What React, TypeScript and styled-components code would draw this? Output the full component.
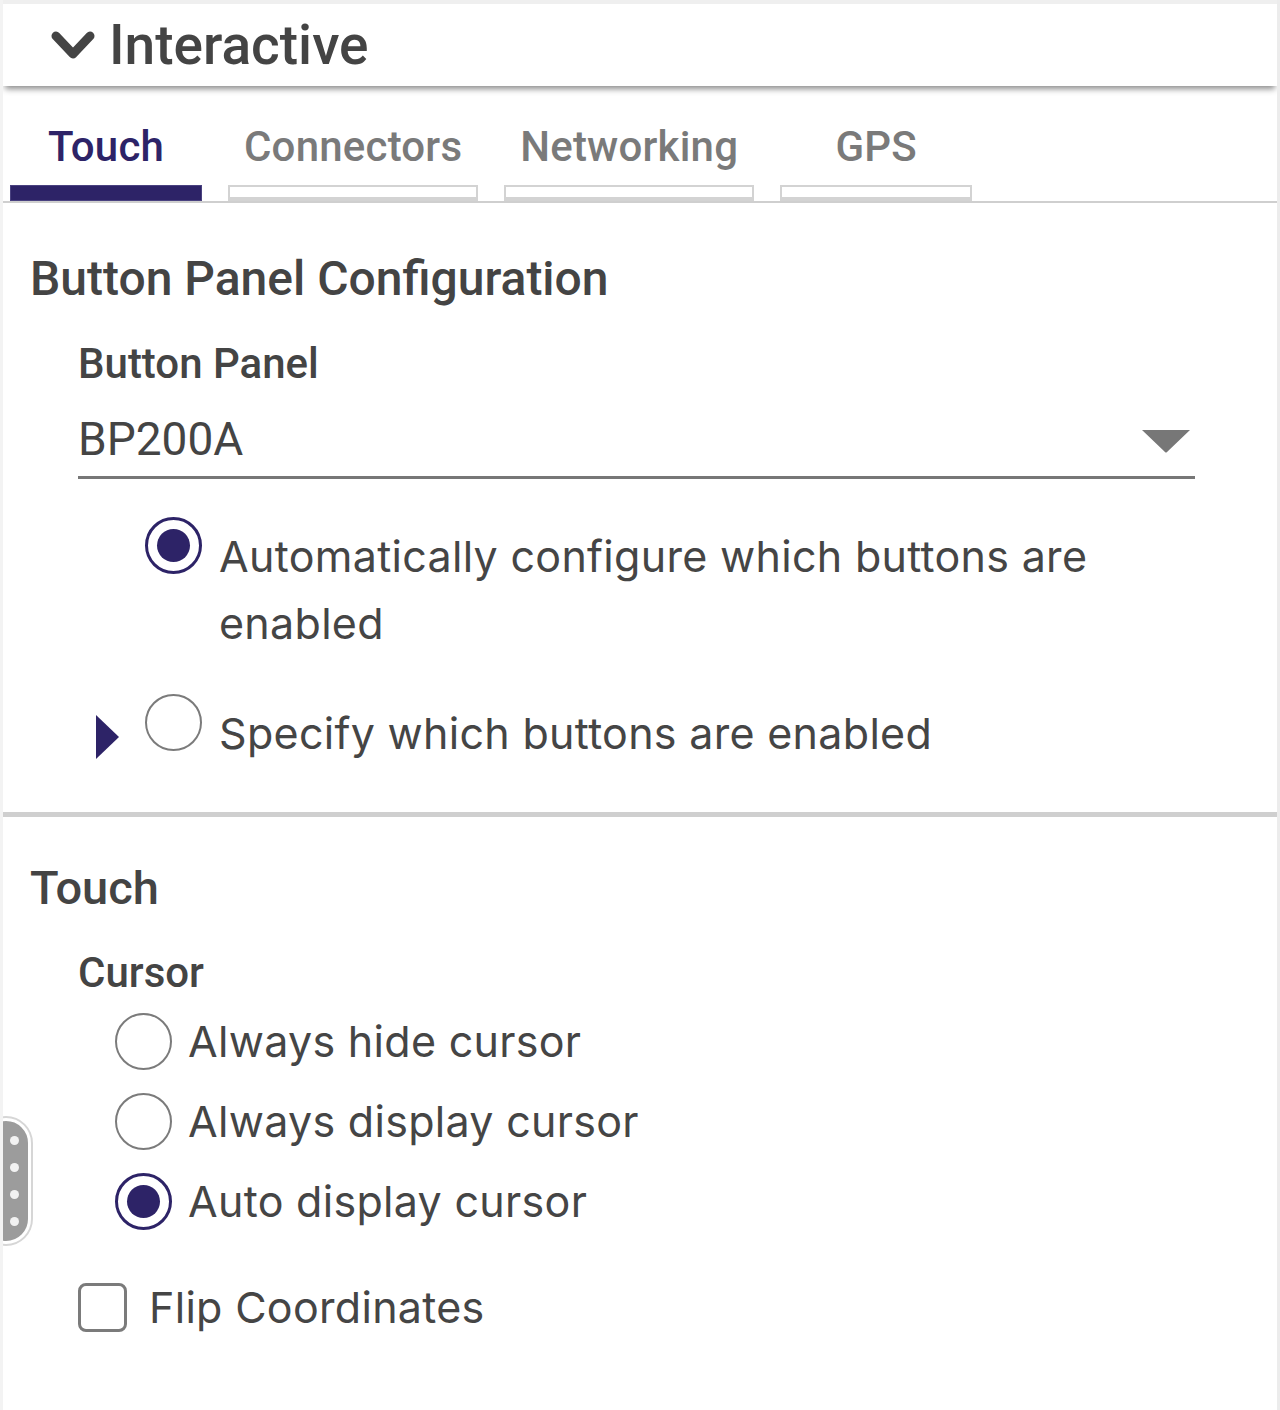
import React from "react";
import styled, { createGlobalStyle } from "styled-components";

const Global = createGlobalStyle`
  html, body { margin: 0; padding: 0; background: #ffffff; }
  body { font-family: Roboto, "Liberation Sans", sans-serif; color: #444; }
  * { box-sizing: border-box; }
`;

const PURPLE = "#2d2367";

const Page = styled.div`
  position: relative;
  width: 1280px;
  min-height: 1410px;
  background: #ffffff;
  border-left: 3px solid #f3f3f3;
  border-right: 3px solid #ececec;
  overflow: hidden;
`;

const Header = styled.header`
  position: relative;
  z-index: 1;
  display: flex;
  align-items: center;
  gap: 13px;
  height: 86px;
  padding-left: 47px;
  border-top: 4px solid #efefef;
  background: #fff;
  box-shadow: 0 5px 6px -2px rgba(0, 0, 0, 0.45);
`;

const Title = styled.h1`
  margin: 0;
  font-family: Roboto, sans-serif;
  font-weight: 500;
  font-size: 55px;
  line-height: 62px;
  color: #444;
`;

const TabBar = styled.nav`
  display: flex;
  gap: 26px;
  padding: 37px 0 0 7px;
  border-bottom: 2px solid #cfcfcf;
`;

const Tab = styled.div`
  display: flex;
  flex-direction: column;
  align-items: stretch;
  min-width: 192px;
`;

const TabLabel = styled.span<{ $active?: boolean }>`
  padding: 0 16px;
  text-align: center;
  font-family: Roboto, sans-serif;
  font-weight: 500;
  font-size: 42px;
  letter-spacing: 0.2px;
  line-height: 48px;
  color: ${(p) => (p.$active ? PURPLE : "#7a7a7a")};
`;

const TabIndicator = styled.span<{ $active?: boolean }>`
  display: block;
  margin-top: 14px;
  height: 16px;
  background: ${(p) => (p.$active ? PURPLE : "#fff")};
  border: ${(p) => (p.$active ? "1px solid #4a4280" : "2px solid #d3d3d3")};
  border-bottom-width: ${(p) => (p.$active ? "1px" : "4px")};
`;

const Section = styled.section<{ $top: number; $bottom: number }>`
  padding: ${(p) => p.$top}px 82px ${(p) => p.$bottom}px 27px;
`;

const SectionTitle = styled.h2<{ $size: number }>`
  margin: 0;
  font-family: Roboto, sans-serif;
  font-weight: 500;
  font-size: ${(p) => p.$size}px;
  line-height: ${(p) => p.$size + 8}px;
  color: #444;
`;

const Field = styled.div<{ $gap: number }>`
  display: flex;
  flex-direction: column;
  padding-left: 48px;
  margin-top: ${(p) => p.$gap}px;
`;

const FieldLabel = styled.div`
  font-family: Roboto, sans-serif;
  font-weight: 500;
  font-size: 42px;
  line-height: 50px;
  color: #444;
`;

const Select = styled.div`
  display: flex;
  align-items: center;
  justify-content: space-between;
  margin-top: 23px;
  padding-bottom: 10px;
  border-bottom: 3px solid #777;
  font-family: Roboto, sans-serif;
  font-weight: 400;
  font-size: 46px;
  line-height: 54px;
  color: #444;
`;

const Caret = styled.svg`
  width: 48px;
  height: 24px;
  margin-right: 5px;
  margin-top: 4px;
`;

const OptionList = styled.div<{ $gap: number; $top: number }>`
  display: flex;
  flex-direction: column;
  gap: ${(p) => p.$gap}px;
  margin-top: ${(p) => p.$top}px;
`;

const ExpandRow = styled.div`
  display: flex;
  align-items: flex-start;
  padding-left: 48px;
`;

const ExpanderSlot = styled.div`
  width: 67px;
  flex: none;
  display: flex;
  padding-left: 18px;
  padding-top: 15px;
`;

const Radio = styled.span<{ $checked?: boolean; $offset?: number }>`
  position: relative;
  flex: none;
  width: 57px;
  height: 57px;
  margin-top: ${(p) => p.$offset ?? 0}px;
  border-radius: 50%;
  border: ${(p) => (p.$checked ? `3px solid ${PURPLE}` : "2.5px solid #7b7b7b")};
  background: #fff;
  &::after {
    content: "";
    display: ${(p) => (p.$checked ? "block" : "none")};
    position: absolute;
    left: 50%;
    top: 50%;
    width: 33px;
    height: 33px;
    margin: -16.5px 0 0 -16.5px;
    border-radius: 50%;
    background: ${PURPLE};
  }
`;

const OptionText = styled.span<{ $gap: number }>`
  margin-left: ${(p) => p.$gap}px;
  font-family: Inter, "Noto Sans", sans-serif;
  font-weight: 400;
  font-size: 43px;
  letter-spacing: 0.3px;
  line-height: 67px;
  color: #454545;
`;

const Divider = styled.hr`
  margin: 0;
  border: 0;
  height: 5px;
  background: #cfcfcf;
`;

const RadioRow = styled.div`
  display: flex;
  align-items: center;
  padding-left: 37px;
`;

const RadioGroup = styled.div`
  display: flex;
  flex-direction: column;
  gap: 13px;
  margin-top: 10px;
`;

const CheckRow = styled.div`
  display: flex;
  align-items: center;
  margin-top: 39px;
`;

const CheckBox = styled.span`
  flex: none;
  width: 49px;
  height: 49px;
  border: 3px solid #7b7b7b;
  border-radius: 8px;
  background: #fff;
`;

const Handle = styled.div`
  position: absolute;
  left: -22px;
  top: 1118px;
  width: 50px;
  height: 126px;
  border-radius: 25px;
  background: #9c9c9c;
  border: 3px solid #fff;
  box-shadow: 0 0 0 2px #d6d6d6;
  display: flex;
  flex-direction: column;
  align-items: flex-end;
  justify-content: center;
  gap: 18px;
  padding-right: 9px;
`;

const Dot = styled.span`
  width: 9px;
  height: 9px;
  border-radius: 50%;
  background: #f2f2f2;
`;

const Chevron = () => (
  <svg width="46" height="32" viewBox="0 0 46 32" style={{ flex: "none" }}>
    <polyline
      points="6,7 23,25 40,7"
      fill="none"
      stroke="#444"
      strokeWidth="9"
      strokeLinecap="round"
      strokeLinejoin="round"
    />
  </svg>
);

const tabs = ["Touch", "Connectors", "Networking", "GPS"];

export default function App() {
  return (
    <>
      <Global />
      <Page>
        <Header>
          <Chevron />
          <Title>Interactive</Title>
        </Header>

        <TabBar>
          {tabs.map((t, i) => (
            <Tab key={t}>
              <TabLabel $active={i === 0}>{t}</TabLabel>
              <TabIndicator $active={i === 0} />
            </Tab>
          ))}
        </TabBar>

        <Section $top={48} $bottom={45}>
          <SectionTitle $size={48}>Button Panel Configuration</SectionTitle>
          <Field $gap={32}>
            <FieldLabel>Button Panel</FieldLabel>
            <Select>
              <span>BP200A</span>
              <Caret viewBox="0 0 48 24">
                <path d="M0 1 H48 L25 23 Q24 24 23 23 Z" fill="#777" />
              </Caret>
            </Select>
          </Field>
          <OptionList $gap={43} $top={44}>
            <ExpandRow>
              <ExpanderSlot />
              <Radio $checked $offset={-6} />
              <OptionText $gap={17}>
                Automatically configure which buttons are enabled
              </OptionText>
            </ExpandRow>
            <ExpandRow>
              <ExpanderSlot>
                <svg width="23" height="44" viewBox="0 0 23 44">
                  <path d="M0 0 L23 22 L0 44 Z" fill={PURPLE} />
                </svg>
              </ExpanderSlot>
              <Radio $offset={-6} />
              <OptionText $gap={17}>Specify which buttons are enabled</OptionText>
            </ExpandRow>
          </OptionList>
        </Section>

        <Divider />

        <Section $top={43} $bottom={70}>
          <SectionTitle $size={47}>Touch</SectionTitle>
          <Field $gap={33}>
            <FieldLabel>Cursor</FieldLabel>
            <RadioGroup>
              <RadioRow>
                <Radio />
                <OptionText $gap={16}>Always hide cursor</OptionText>
              </RadioRow>
              <RadioRow>
                <Radio />
                <OptionText $gap={16}>Always display cursor</OptionText>
              </RadioRow>
              <RadioRow>
                <Radio $checked />
                <OptionText $gap={16}>Auto display cursor</OptionText>
              </RadioRow>
            </RadioGroup>
            <CheckRow>
              <CheckBox />
              <OptionText $gap={22}>Flip Coordinates</OptionText>
            </CheckRow>
          </Field>
        </Section>

        <Handle>
          <Dot />
          <Dot />
          <Dot />
          <Dot />
        </Handle>
      </Page>
    </>
  );
}
